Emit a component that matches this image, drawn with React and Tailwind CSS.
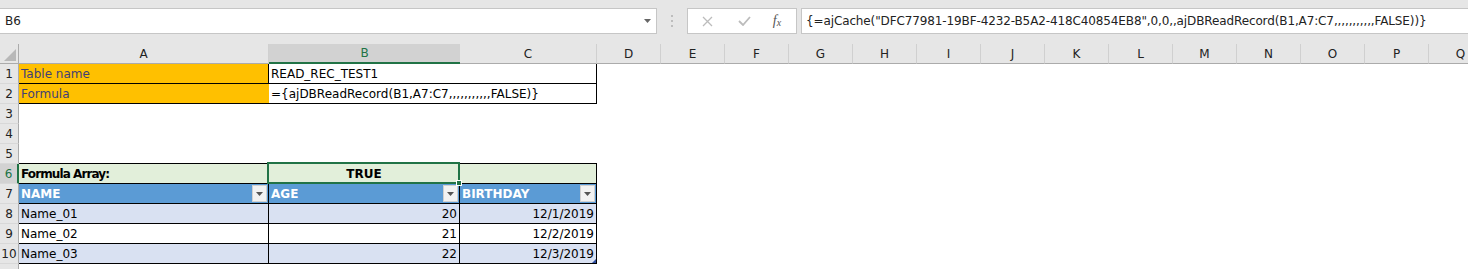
import React from 'react';

const cols = [
  { l: 'A', w: 'w-[250px]' },
  { l: 'B', w: 'w-[191px]' },
  { l: 'C', w: 'w-[137px]' },
  { l: 'D', w: 'w-[64px]' },
  { l: 'E', w: 'w-[64px]' },
  { l: 'F', w: 'w-[64px]' },
  { l: 'G', w: 'w-[64px]' },
  { l: 'H', w: 'w-[64px]' },
  { l: 'I', w: 'w-[64px]' },
  { l: 'J', w: 'w-[64px]' },
  { l: 'K', w: 'w-[64px]' },
  { l: 'L', w: 'w-[64px]' },
  { l: 'M', w: 'w-[64px]' },
  { l: 'N', w: 'w-[64px]' },
  { l: 'O', w: 'w-[64px]' },
  { l: 'P', w: 'w-[64px]' },
  { l: 'Q', w: 'w-[64px]' },
];

const commas = ',,,,,,,,,,,';

const FilterButton = () => (
  <div className="w-[15px] h-[17px] mr-[1px] shrink-0 bg-[#f2f2f2] border border-[#d0d0d0] flex items-center justify-center">
    <svg width="7" height="4" viewBox="0 0 7 4">
      <path d="M0 0 L7 0 L3.5 4 Z" fill="#555" />
    </svg>
  </div>
);

const RowHead = ({ n, active }) => (
  <div
    className={`w-[19px] h-[20px] shrink-0 flex items-center text-[12px] border-b border-[#d8d8d8] ${
      active
        ? 'bg-[#d2d2d2] text-[#217346] border-r-2 border-r-[#217346]'
        : 'bg-[#e6e6e6] text-[#222] border-r border-r-[#ababab]'
    }`}
  >
    <span className="w-full text-center leading-none">{n}</span>
  </div>
);

const Row = ({ n, active, children }) => (
  <div className="flex h-[20px]">
    <RowHead n={n} active={active} />
    {children}
    <div className="flex-1 h-[20px]" />
  </div>
);

export default function App() {
  return (
    <div className="w-[1468px] h-[269px] overflow-hidden bg-white font-['DejaVu_Sans',sans-serif] text-[12px] text-black">
      {/* formula bar */}
      <div className="h-[44px] bg-[#e6e6e6] pt-[8px] flex items-start">
        <div className="w-[657px] h-[26px] bg-white border border-[#c6c6c6] border-l-0 flex items-center justify-between pl-[5px] pr-[5px]">
          <span className="text-[#222]">B6</span>
          <svg width="7" height="4" viewBox="0 0 7 4">
            <path d="M0 0 L7 0 L3.5 4 Z" fill="#666" />
          </svg>
        </div>
        <div className="w-[30px] h-[26px] flex flex-col items-center justify-center gap-[3px]">
          <div className="w-[2px] h-[2px] bg-[#bdbdbd]" />
          <div className="w-[2px] h-[2px] bg-[#bdbdbd]" />
          <div className="w-[2px] h-[2px] bg-[#bdbdbd]" />
        </div>
        <div className="w-[110px] h-[26px] bg-white border border-[#c6c6c6] flex items-center">
          <div className="w-[38px] flex justify-center">
            <svg width="11" height="11" viewBox="0 0 11 11">
              <path d="M1 1 L10 10 M10 1 L1 10" stroke="#bcbcbc" strokeWidth="1.3" />
            </svg>
          </div>
          <div className="w-[36px] flex justify-center">
            <svg width="13" height="10" viewBox="0 0 13 10">
              <path d="M1 5 L5 9 L12 1" stroke="#bcbcbc" strokeWidth="1.8" fill="none" />
            </svg>
          </div>
          <div className="w-[30px] flex justify-center font-['Liberation_Serif',serif] italic text-[14px] text-[#555] leading-none">
            <span>f</span>
            <span className="text-[10px] self-end">x</span>
          </div>
        </div>
        <div className="flex-1 h-[26px] ml-[4px] bg-white border border-[#c6c6c6] border-r-0 flex items-center pl-[4px]">
          <span className="text-[#222] whitespace-nowrap tracking-[-0.12px]">
            {`{=ajCache("DFC77981-19BF-4232-B5A2-418C40854EB8",0,0,,ajDBReadRecord(B1,A7:C7${commas}FALSE))}`}
          </span>
        </div>
      </div>

      {/* column headers */}
      <div className="flex h-[20px]">
        <div className="w-[19px] h-[20px] shrink-0 bg-[#e6e6e6] border-r border-b border-[#ababab] flex items-end justify-end p-[2px]">
          <svg width="12" height="12" viewBox="0 0 12 12">
            <path d="M12 0 L12 12 L0 12 Z" fill="#b8b8b8" />
          </svg>
        </div>
        {cols.map((c) => (
          <div
            key={c.l}
            className={`${c.w} h-[20px] shrink-0 flex items-center justify-center ${
              c.l === 'B'
                ? 'bg-[#d2d2d2] text-[#217346] border-b-2 border-[#217346]'
                : 'bg-[#e6e6e6] text-[#222] border-b border-[#ababab] border-r border-r-[#d0d0d0]'
            }`}
          >
            {c.l}
          </div>
        ))}
        <div className="flex-1 bg-[#e6e6e6] border-b border-[#ababab]" />
      </div>

      {/* rows 1-2: parameters */}
      <Row n="1">
        <div className="w-[250px] shrink-0 h-[20px] bg-[#ffc000] text-[#3f3f76] border-r border-b border-black flex items-center pl-[2px]">Table name</div>
        <div className="w-[191px] shrink-0 h-[20px] border-b border-black flex items-center pl-[2px]">READ_REC_TEST1</div>
        <div className="w-[137px] shrink-0 h-[20px] border-r border-b border-black" />
      </Row>
      <Row n="2">
        <div className="w-[250px] shrink-0 h-[20px] bg-[#ffc000] text-[#3f3f76] border-b border-black flex items-center pl-[2px]">Formula</div>
        <div className="w-[191px] shrink-0 h-[20px] border-b border-black flex items-center pl-[2px] whitespace-nowrap">
          {`={ajDBReadRecord(B1,A7:C7${commas}FALSE)}`}
        </div>
        <div className="w-[137px] shrink-0 h-[20px] border-r border-b border-black" />
      </Row>
      <Row n="3" />
      <Row n="4" />
      <Row n="5">
        <div className="w-[578px] shrink-0 h-[20px] border-b border-black" />
      </Row>

      {/* row 6: formula array */}
      <Row n="6" active>
        <div className="w-[250px] shrink-0 h-[20px] bg-[#e2efda] border-r border-b border-black flex items-center pl-[2px] font-bold tracking-[-0.9px]">Formula Array:</div>
        <div className="relative w-[191px] shrink-0 h-[20px] bg-[#e2efda] border-r border-b border-black flex items-center justify-center font-bold">
          TRUE
          <div className="absolute -left-[2px] -top-[2px] -right-[1px] -bottom-[1px] border-2 border-[#217346]" />
          <div className="absolute -right-[3px] -bottom-[3px] w-[6px] h-[6px] bg-[#217346] border border-white" />
        </div>
        <div className="w-[137px] shrink-0 h-[20px] bg-[#e2efda] border-r border-b border-black" />
      </Row>

      {/* row 7: table header */}
      <Row n="7">
        <div className="w-[250px] shrink-0 h-[20px] bg-[#5b9bd5] text-white font-bold border-r border-b border-black flex items-center justify-between pl-[2px]">
          <span>NAME</span>
          <FilterButton />
        </div>
        <div className="w-[191px] shrink-0 h-[20px] bg-[#5b9bd5] text-white font-bold border-r border-b border-black flex items-center justify-between pl-[2px]">
          <span>AGE</span>
          <FilterButton />
        </div>
        <div className="w-[137px] shrink-0 h-[20px] bg-[#5b9bd5] text-white font-bold border-r border-b border-black flex items-center justify-between pl-[2px]">
          <span>BIRTHDAY</span>
          <FilterButton />
        </div>
      </Row>

      {[
        ['8', 'Name_01', '20', '12/1/2019', 'bg-[#d9e1f2]'],
        ['9', 'Name_02', '21', '12/2/2019', 'bg-white'],
        ['10', 'Name_03', '22', '12/3/2019', 'bg-[#d9e1f2]'],
      ].map(([n, name, age, date, bg]) => (
        <Row key={n} n={n}>
          <div className={`w-[250px] shrink-0 h-[20px] ${bg} border-r border-b border-black flex items-center pl-[2px]`}>{name}</div>
          <div className={`w-[191px] shrink-0 h-[20px] ${bg} border-r border-b border-black flex items-center justify-end pr-[2px]`}>{age}</div>
          <div className={`relative w-[137px] shrink-0 h-[20px] ${bg} border-r border-b border-black flex items-center justify-end pr-[2px]`}>
            {date}
            {n === '10' && (
              <svg className="absolute right-0 bottom-0" width="4" height="4" viewBox="0 0 4 4">
                <path d="M4 0 L4 4 L0 4 Z" fill="#2f4fa0" />
              </svg>
            )}
          </div>
        </Row>
      ))}
      <Row n="" />
    </div>
  );
}
